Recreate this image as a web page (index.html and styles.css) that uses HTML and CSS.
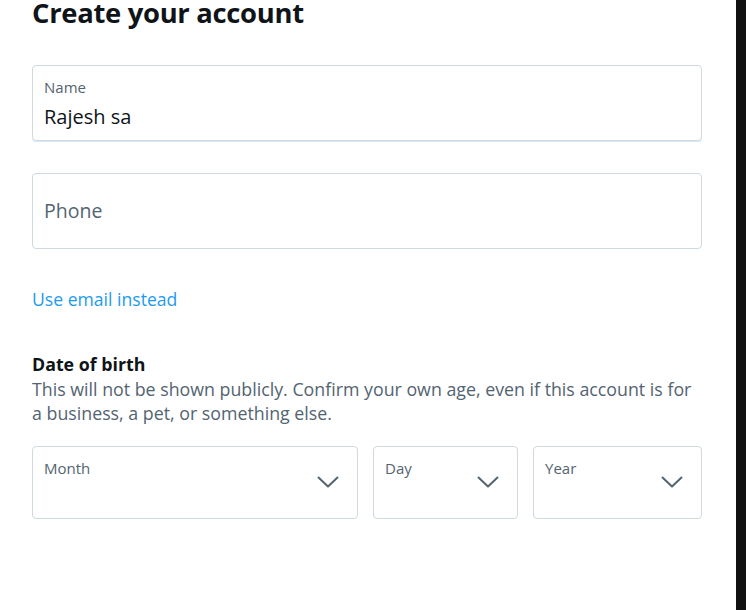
FILE: index.html
```html
<!DOCTYPE html>
<html lang="en">
<head>
<meta charset="utf-8">
<title>Create your account</title>
<link rel="stylesheet" href="styles.css">
</head>
<body>
<div class="page">
  <main class="form">
    <h1 class="title">Create your account</h1>
    <label class="field field--filled">
      <span class="field-label">Name</span>
      <span class="field-value">Rajesh sa</span>
    </label>
    <label class="field field--empty">
      <span class="field-placeholder">Phone</span>
    </label>
    <a class="switch-link" href="#">Use email instead</a>
    <h2 class="dob-title">Date of birth</h2>
    <p class="dob-desc">This will not be shown publicly. Confirm your own age, even if this account is for a business, a pet, or something else.</p>
    <div class="dob-row">
      <div class="select">
        <span class="select-label">Month</span>
        <svg class="chevron" viewBox="0 0 22 12" width="22" height="12"><path d="M1.5 1.5 11 10.5 20.5 1.5"/></svg>
      </div>
      <div class="select">
        <span class="select-label">Day</span>
        <svg class="chevron" viewBox="0 0 22 12" width="22" height="12"><path d="M1.5 1.5 11 10.5 20.5 1.5"/></svg>
      </div>
      <div class="select">
        <span class="select-label">Year</span>
        <svg class="chevron" viewBox="0 0 22 12" width="22" height="12"><path d="M1.5 1.5 11 10.5 20.5 1.5"/></svg>
      </div>
    </div>
  </main>
  <div class="edge"></div>
</div>
</body>
</html>
```

FILE: styles.css
```css
* { box-sizing: border-box; }
html, body { margin: 0; padding: 0; background: #fff; }
body {
  font-family: "Open Sans", "Noto Sans", "DejaVu Sans", sans-serif;
  color: #0f1419;
}
.page {
  display: flex;
  height: 610px;
  overflow: hidden;
}
.form {
  width: 736px;
  padding: 0 34px 0 32px;
  display: flex;
  flex-direction: column;
}
.edge {
  width: 10px;
  background: #111111;
}
.title {
  margin: 0;
  font-size: 27.4px;
  line-height: 26px;
  font-weight: 700;
  letter-spacing: -0.3px;
  color: #0f1419;
}
.field {
  display: flex;
  flex-direction: column;
  border: 1px solid #cfd9de;
  border-radius: 4px;
  padding: 0 11px;
}
.field--filled {
  margin-top: 39px;
  height: 76px;
  box-shadow: 0 1px 0 #d6e6f3;
}
.field-label {
  margin-top: 11px;
  font-size: 15px;
  line-height: 20px;
  color: #536471;
}
.field-value {
  margin-top: 6px;
  font-size: 20px;
  line-height: 28px;
  color: #0f1419;
}
.field--empty {
  margin-top: 32px;
  height: 76px;
  justify-content: center;
}
.field-placeholder {
  font-size: 19.5px;
  line-height: 28px;
  color: #536471;
}
.switch-link {
  align-self: flex-start;
  margin-top: 38px;
  font-size: 17.6px;
  line-height: 24px;
  color: #1d9bf0;
  text-decoration: none;
}
.dob-title {
  margin: 41px 0 0;
  font-size: 17.8px;
  line-height: 24px;
  font-weight: 700;
  color: #0f1419;
}
.dob-desc {
  margin: 1px 0 0;
  font-size: 17.8px;
  line-height: 24px;
  color: #536471;
}
.dob-row {
  margin-top: 21px;
  display: grid;
  grid-template-columns: 326px 145px 169px;
  column-gap: 15px;
}
.select {
  position: relative;
  height: 73px;
  border: 1px solid #cfd9de;
  border-radius: 4px;
  padding: 10px 11px 0;
}
.select-label {
  font-size: 15px;
  line-height: 20px;
  color: #536471;
}
.chevron {
  position: absolute;
  right: 18px;
  top: 29px;
  fill: none;
  stroke: #536471;
  stroke-width: 2;
  stroke-linecap: round;
  stroke-linejoin: round;
}
```
